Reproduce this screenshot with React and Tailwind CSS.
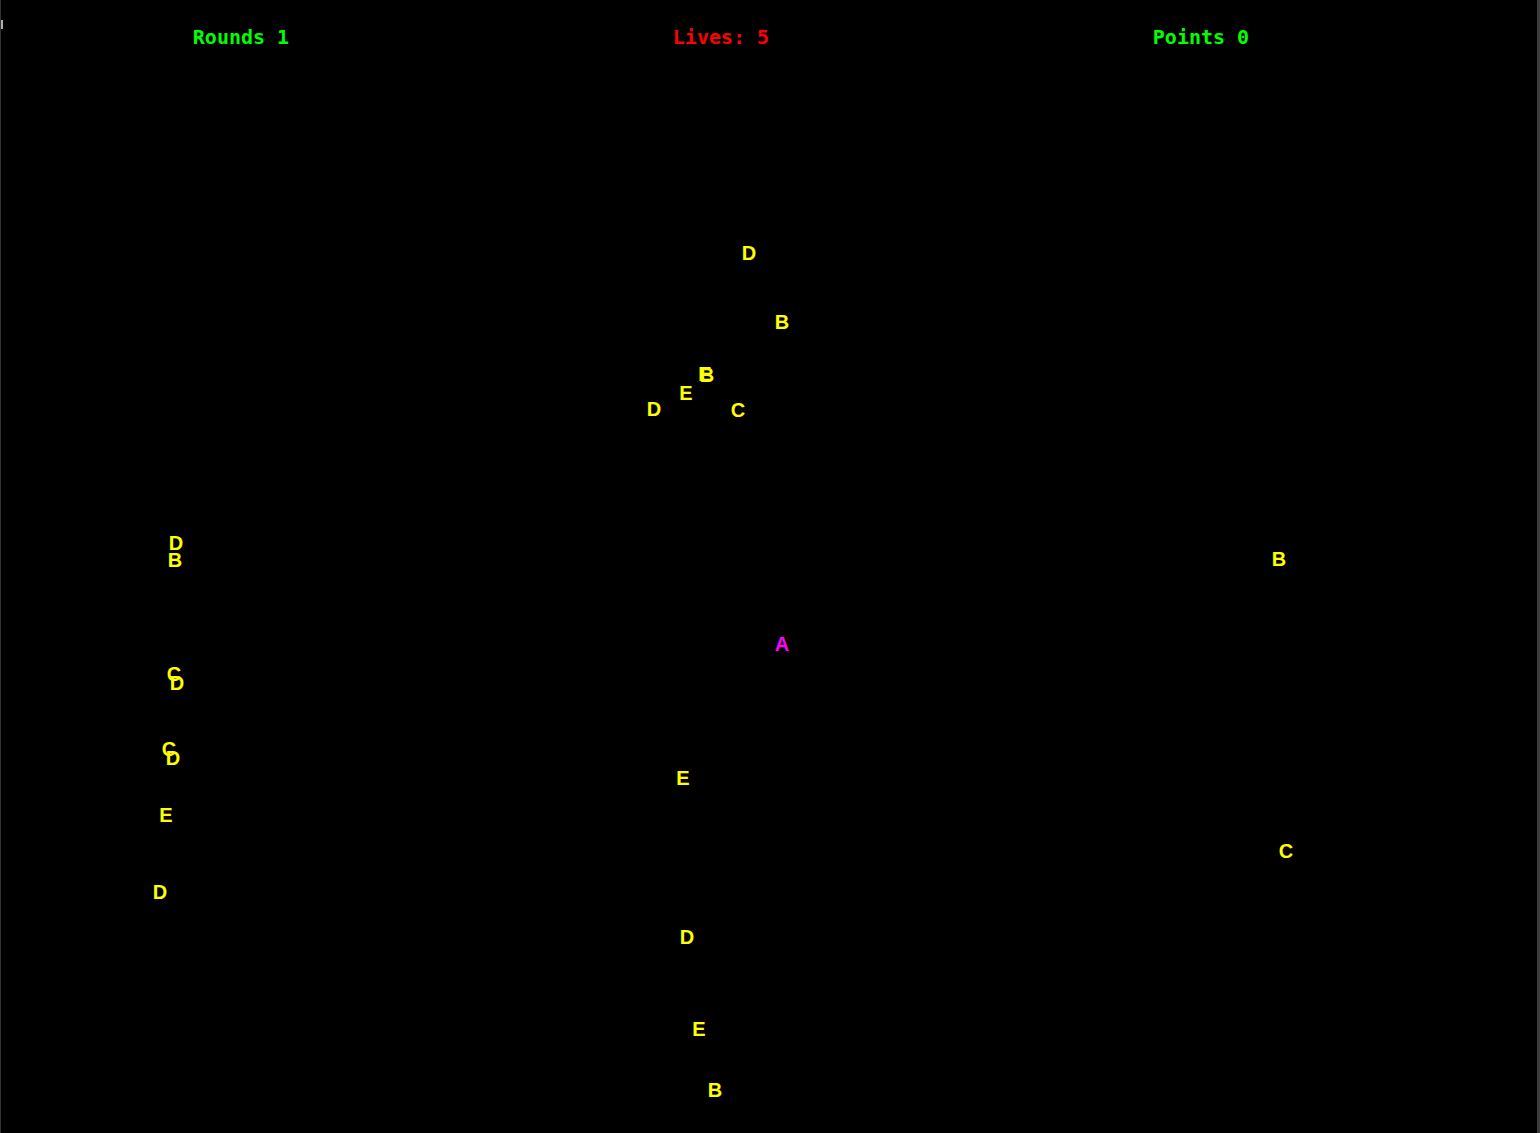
import React from "react";

const letters = [
  { c: "D", x: 748, y: 253 },
  { c: "B", x: 781, y: 322 },
  { c: "E", x: 704, y: 374 },
  { c: "B", x: 706, y: 375 },
  { c: "E", x: 685, y: 393 },
  { c: "D", x: 653, y: 409 },
  { c: "C", x: 737, y: 410 },
  { c: "D", x: 175, y: 543 },
  { c: "B", x: 174, y: 560 },
  { c: "C", x: 173, y: 674 },
  { c: "D", x: 176, y: 683 },
  { c: "C", x: 168, y: 749 },
  { c: "D", x: 172, y: 758 },
  { c: "E", x: 165, y: 815 },
  { c: "D", x: 159, y: 892 },
  { c: "B", x: 1278, y: 559 },
  { c: "E", x: 682, y: 778 },
  { c: "C", x: 1285, y: 851 },
  { c: "D", x: 686, y: 937 },
  { c: "E", x: 698, y: 1029 },
  { c: "B", x: 714, y: 1090 },
];

function Letter({ c, x, y, magenta }) {
  return (
    <span
      className={`absolute w-[20px] text-center text-[20px] font-bold leading-[20px] ${magenta ? "text-[#ff00ff]" : "text-[#ffff00]"}`}
      style={{ left: x - 10, top: y - 10, fontFamily: '"Liberation Sans", Arial, sans-serif' }}
    >
      {c}
    </span>
  );
}

export default function App() {
  return (
    <div className="relative h-[1133px] w-[1540px] overflow-hidden bg-black border-l border-[#333333] border-r-[3px] border-r-[#3c3c3c]">
      <span className="absolute left-0 top-[20px] h-[9px] w-[2px] bg-[#b0b0b0]" />
      <div
        className="flex w-[1440px] justify-around pt-[25px] text-[20px] font-bold leading-[24px]"
        style={{ fontFamily: '"DejaVu Sans Mono", monospace' }}
      >
        <span className="text-[#00ff00]">Rounds 1</span>
        <span className="text-[#ff0000]">Lives: 5</span>
        <span className="text-[#00ff00]">Points 0</span>
      </div>
      {letters.map((l, i) => (
        <Letter key={i} {...l} />
      ))}
      <Letter c="A" x={781} y={644} magenta />
    </div>
  );
}
